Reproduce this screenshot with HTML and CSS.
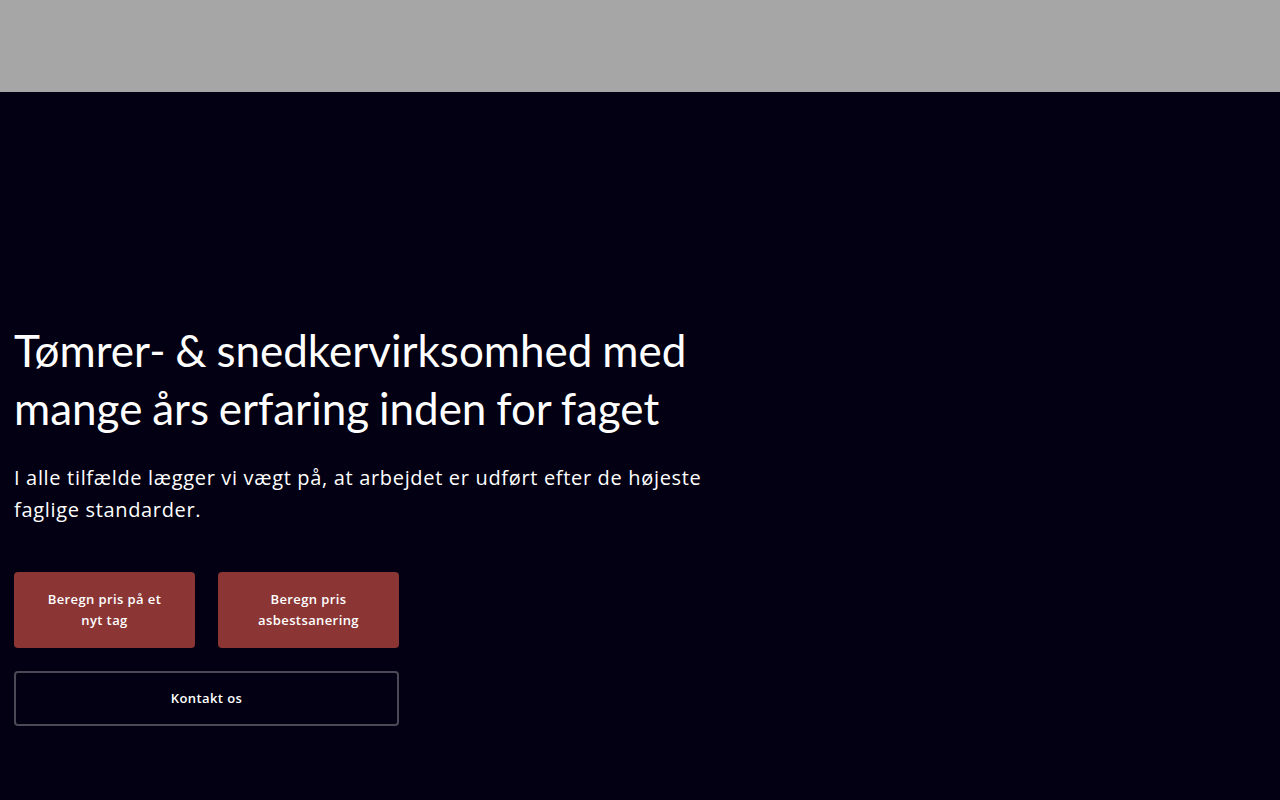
FILE: index.html
```html
<!DOCTYPE html>
<html lang="da">
  <head>
    <meta charset="UTF-8" />
    <meta name="viewport" content="width=device-width, initial-scale=1.0" />
    <title>Tømrer- & snedkervirksomhed</title>
    <link rel="stylesheet" href="styles.css">
  </head>
  <body>
    <header class="top-bar"></header>

    <section class="hero">
      <div class="hero-content">
        <h1>Tømrer- &amp; snedkervirksomhed med mange års erfaring inden for faget</h1>
        <p>I alle tilfælde lægger vi vægt på, at arbejdet er udført efter de højeste faglige standarder.</p>

        <div class="actions">
          <a class="btn btn-red" href="#">Beregn pris på et<br />nyt tag</a>
          <a class="btn btn-red" href="#">Beregn pris<br />asbestsanering</a>
          <a class="btn btn-outline" href="#">Kontakt os</a>
        </div>
      </div>
    </section>
  </body>
</html>
```

FILE: styles.css
```css
body {
  margin: 0;
  background: #020012;
  color: #fff;
  font-family: "Open Sans", sans-serif;
}

.top-bar {
  height: 92px;
  background: #a6a6a6;
}

.hero {
  height: 708px;
  padding: 0 14px;
  box-sizing: border-box;
  display: flex;
  align-items: flex-start;
}

.hero-content {
  width: 720px;
  padding-top: 229px;
}

.hero h1 {
  font-family: "Lato", sans-serif;
  font-weight: 400;
  font-size: 44px;
  line-height: 58px;
  word-spacing: -1.5px;
  margin: 0 0 25px;
  max-width: 700px;
}

.hero p {
  font-size: 20px;
  line-height: 32px;
  margin: 0 0 46px;
  letter-spacing: 0.67px;
  max-width: 710px;
}

.actions {
  display: grid;
  grid-template-columns: 181px 181px;
  column-gap: 23px;
  row-gap: 23px;
}

.btn {
  display: flex;
  align-items: center;
  justify-content: center;
  text-align: center;
  color: #fff;
  text-decoration: none;
  font-size: 13px;
  font-weight: 600;
  line-height: 21px;
  letter-spacing: 0.4px;
  border-radius: 4px;
  box-sizing: border-box;
}

.btn-red {
  height: 76px;
  background: #8b3535;
}

.btn-outline {
  grid-column: 1 / 3;
  height: 55px;
  border: 2px solid #4a4955;
}
```
